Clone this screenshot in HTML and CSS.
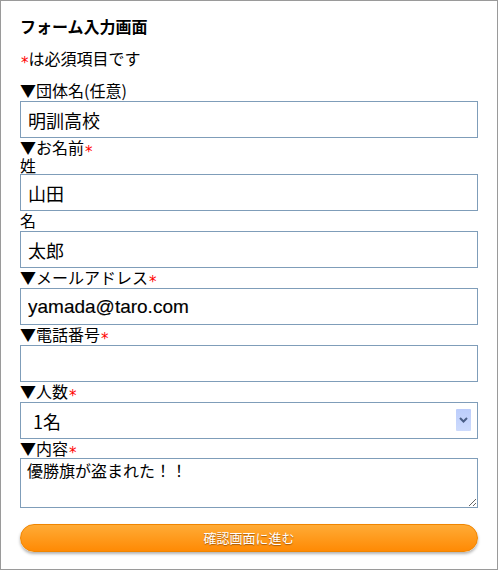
FILE: index.html
```html
<!DOCTYPE html>
<html lang="ja">
<head>
<meta charset="utf-8">
<title>フォーム入力画面</title>
<link rel="stylesheet" href="styles.css">
</head>
<body>
<div class="page">
  <h1 class="title">フォーム入力画面</h1>
  <p class="note"><span class="req">*</span>は必須項目です</p>
  <form class="form">
    <div class="label">▼団体名(任意)</div>
    <input class="field" type="text" value="明訓高校">

    <div class="label label-head">▼お名前<span class="req">*</span></div>
    <div class="label label-sub">姓</div>
    <input class="field" type="text" value="山田">
    <div class="label">名</div>
    <input class="field" type="text" value="太郎">

    <div class="label">▼メールアドレス<span class="req">*</span></div>
    <input class="field field-latin" type="text" value="yamada@taro.com">

    <div class="label">▼電話番号<span class="req">*</span></div>
    <input class="field" type="text" value="">

    <div class="label">▼人数<span class="req">*</span></div>
    <div class="select-wrap">
      <select class="field select">
        <option>1名</option>
        <option>2名</option>
      </select>
      <span class="select-arrow"><svg width="9" height="6" viewBox="0 0 9 6"><path d="M1 1 L4.5 4.5 L8 1" fill="none" stroke="#4a5e86" stroke-width="2"/></svg></span>
    </div>

    <div class="label label-tight">▼内容<span class="req">*</span></div>
    <textarea class="area">優勝旗が盗まれた！！</textarea>

    <button class="submit" type="button">確認画面に進む</button>
  </form>
</div>
</body>
</html>
```

FILE: styles.css
```css
html, body {
  margin: 0;
  padding: 0;
  background: #fff;
}

.page {
  box-sizing: border-box;
  width: 498px;
  height: 570px;
  border: 1px solid #9a9a9a;
  padding: 16px 19px 0;
  font-family: "Noto Sans CJK JP", sans-serif;
  color: #000;
}

.title {
  margin: 0 0 14px;
  font-size: 16px;
  line-height: 18px;
  font-weight: bold;
}

.note {
  margin: 0 0 14px;
  font-size: 16px;
  line-height: 18px;
  height: 18px;
}

.req {
  display: inline-block;
  line-height: 0;
  color: #ff0000;
  font-family: "DejaVu Sans", sans-serif;
  font-size: 15px;
  transform: translateY(3px);
  margin-left: 1px;
}

.form {
  margin: 0;
}

.label {
  font-size: 16px;
  line-height: 18px;
  height: 18px;
  margin-bottom: 2px;
}

.label-head {
  margin-bottom: 0;
}

.label-sub {
  margin-bottom: 0;
}

.label-tight {
  margin-bottom: 1px;
}

.field {
  display: block;
  box-sizing: border-box;
  width: 100%;
  height: 37px;
  margin: 0;
  border: 1px solid #7f9db9;
  border-radius: 0;
  padding: 0 7px;
  font-family: "Noto Sans CJK JP", sans-serif;
  font-size: 18px;
  color: #000;
  background: #fff;
  outline: none;
}

.field-latin {
  font-family: "Liberation Sans", Arial, sans-serif;
  font-size: 19px;
  -webkit-text-stroke: 0.15px #000;
}

.select-wrap {
  position: relative;
  margin-bottom: 0;
}

.select {
  -webkit-appearance: none;
  appearance: none;
  padding-left: 12px;
}

.select-arrow {
  position: absolute;
  top: 7px;
  right: 7px;
  width: 15px;
  height: 22px;
  background: linear-gradient(#bccdfb, #cddbfd);
  border-radius: 1px;
  display: flex;
  align-items: center;
  justify-content: center;
  pointer-events: none;
}

.area {
  display: block;
  box-sizing: border-box;
  width: 100%;
  height: 50px;
  margin: 0;
  border: 1px solid #7f9db9;
  padding: 2px 6px;
  font-family: "Noto Sans CJK JP", sans-serif;
  font-size: 16px;
  line-height: 19px;
  color: #000;
  outline: none;
}

.submit {
  display: block;
  box-sizing: border-box;
  width: 100%;
  height: 28px;
  margin-top: 16px;
  border: 1px solid #f08500;
  border-radius: 14px;
  background: linear-gradient(#ffab36, #ff8a04);
  box-shadow: 0 2px 3px rgba(0, 0, 0, 0.3);
  color: #fff;
  font-family: "Noto Sans CJK JP", sans-serif;
  font-size: 13px;
  line-height: 26px;
  padding: 0;
  text-shadow: 0 1px 1px rgba(110, 50, 0, 0.6);
  cursor: pointer;
}
```
